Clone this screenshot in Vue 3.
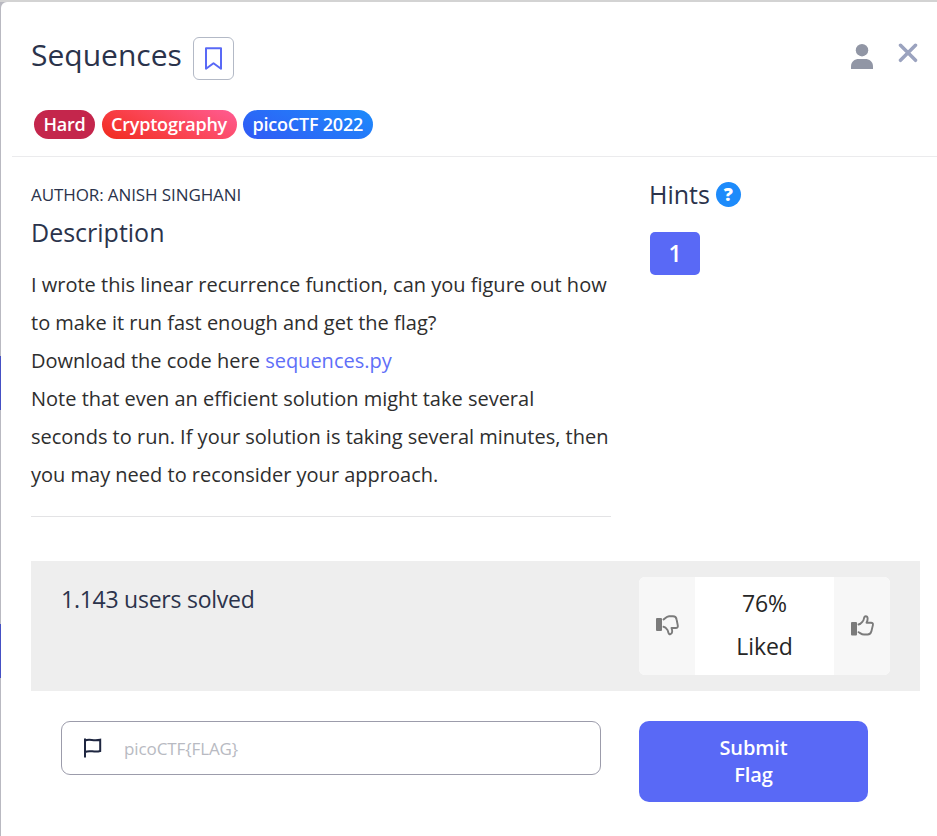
<script setup>
import { ref } from "vue"

const flag = ref("")

const tags = [
    { label: "Hard", type: "hard" },
    { label: "Cryptography", type: "category" },
    { label: "picoCTF 2022", type: "event" },
]
</script>

<template>
    <div class="page">
        <div class="modal">
            <header class="modal-header">
                <div class="title-row">
                    <h1>Sequences</h1>
                    <button class="bookmark" type="button" aria-label="Bookmark">
                        <svg width="18" height="24" viewBox="0 0 18 24">
                            <path d="M1 1.300h15v20.400L8.500 16.200 1 21.700z" fill="none" stroke="#5969f6" stroke-width="2" stroke-linejoin="round" />
                        </svg>
                    </button>
                    <div class="actions">
                        <svg class="user" width="22" height="25" viewBox="0 0 22 25" fill="#9196a5">
                            <circle cx="11" cy="6.200" r="6.200" />
                            <path d="M0 25v-2.500C0 17.500 3.500 15 8 15h6c4.500 0 8 2.500 8 7.500V25z" />
                        </svg>
                        <svg class="close" width="20" height="20" viewBox="0 0 20 20">
                            <path d="M2.500 2.300l15 15M17.500 2.300l-15 15" stroke="#9ba3bf" stroke-width="3.500" stroke-linecap="round" />
                        </svg>
                    </div>
                </div>
                <div class="tags">
                    <span v-for="tag in tags" :key="tag.label" class="tag" :class="tag.type">{{ tag.label }}</span>
                </div>
            </header>

            <main class="content">
                <section class="description">
                    <div class="author">AUTHOR: ANISH SINGHANI</div>
                    <h2>Description</h2>
                    <p>
                        I wrote this linear recurrence function, can you figure out how<br>
                        to make it run fast enough and get the flag?<br>
                        Download the code here <a href="#">sequences.py</a><br>
                        Note that even an efficient solution might take several<br>
                        seconds to run. If your solution is taking several minutes, then<br>
                        you may need to reconsider your approach.
                    </p>
                </section>
                <aside class="hints">
                    <h2>Hints <span class="help">?</span></h2>
                    <button class="hint" type="button">1</button>
                </aside>
            </main>

            <section class="stats">
                <div class="solved">1.143 users solved</div>
                <div class="rating">
                    <button class="vote down" type="button" aria-label="Dislike">
                        <svg width="24" height="21" viewBox="0 0 24 21">
                            <path d="M0 4q0-1 1-1h4q1 0 1 1v11q0 1-1 1H1q-1 0-1-1z" fill="#7b7b7b" />
                            <path d="M7.500 4.500C9 3.500 10.500 1.300 13 1.200h4c2.500 0 3.300 1.300 3.600 3.300l1.200 6c.3 1.500-.5 2.500-2 2.500h-4.300c1 2.500 1.200 6-1.300 6.300-2.200.2-1.700-2.800-2.700-4.300-1-1.500-2-3-4-3.200" fill="none" stroke="#7b7b7b" stroke-width="1.900" stroke-linejoin="round" stroke-linecap="round" />
                        </svg>
                    </button>
                    <div class="score">76%<br>Liked</div>
                    <button class="vote up" type="button" aria-label="Like">
                        <svg width="24" height="21" viewBox="0 0 24 21">
                            <path d="M0 8q0-1 1-1h4q1 0 1 1v11.500q0 1-1 1H1q-1 0-1-1z" fill="#7b7b7b" />
                            <path d="M7.500 9.500C10 9 10.700 7.500 12 6c1.300-1.500.5-4.800 2.700-4.800 2.600 0 2.300 3.800.8 6.500h4.500c1.600 0 2.200 1 1.900 2.400l-1.500 6.200c-.5 2-1.600 3.200-3.800 3.200h-3.600c-2.500 0-3.700-1.500-5.500-2.300" fill="none" stroke="#7b7b7b" stroke-width="1.900" stroke-linejoin="round" stroke-linecap="round" />
                        </svg>
                    </button>
                </div>
            </section>

            <form class="submit" @submit.prevent>
                <label class="flag-field">
                    <svg width="20" height="21" viewBox="0 0 20 21">
                        <path d="M2 .5v19M2 2.700C6 .3 10.500 3.500 17.200 1.700v11.300C11 15 7 11.500 2 14" fill="none" stroke="#1e2640" stroke-width="2" />
                    </svg>
                    <input v-model="flag" type="text" placeholder="picoCTF{FLAG}">
                </label>
                <button class="submit-button" type="submit">Submit<br>Flag</button>
            </form>
        </div>
    </div>
</template>

<style>
body {
    margin: 0;
    overflow: hidden;
}
</style>

<style scoped>
.page {
    box-sizing: border-box;
    width: 937px;
    height: 836px;
    padding: 2px 0 0 1px;
    font-family: "Open Sans", "Noto Sans", sans-serif;
    color: #2b334b;
    /* dimmed page behind the modal */
    background:
        linear-gradient(#4550c4, #4550c4) 0 356px / 1px 54px no-repeat,
        linear-gradient(#4550c4, #4550c4) 0 624px / 1px 54px no-repeat,
        linear-gradient(#d3d3d3, #d3d3d3) 0 0 / 100% 2px no-repeat,
        #b9b9c1;
}

.modal {
    box-sizing: border-box;
    height: 834px;
    background: #fff;
    border-top-left-radius: 6px;
    overflow: hidden;
}

button {
    padding: 0;
    border: none;
    font-family: inherit;
}

h1,
h2,
p {
    margin: 0;
    font-weight: 400;
}

svg {
    display: block;
}

.modal-header {
    box-sizing: border-box;
    height: 155px;
    margin-left: 11px;
    padding: 35px 0 0 19px;
    border-bottom: 1px solid #ebebed;
}

.title-row {
    display: flex;
    align-items: flex-start;

    & h1 {
        width: 162px;
        font-size: 30px;
        line-height: 36px;
    }
}

.bookmark {
    display: flex;
    box-sizing: border-box;
    width: 41px;
    height: 43px;
    padding: 9px 0 0 11px;
    background: #fff;
    border: 1px solid #b3b9c6;
    border-radius: 6px;
}

.actions {
    display: flex;
    gap: 25px;
    margin: 6px 19px 0 auto;

    & .user {
        margin-top: 1px;
    }
}

.tags {
    display: flex;
    gap: 6.500px;
    margin: 30px 0 0 3px;
}

.tag {
    padding: 0 9.500px;
    color: #fff;
    border-radius: 15px;
    font-size: 18px;
    font-weight: 600;
    letter-spacing: -.220px;
    line-height: 29px;

    &.hard {
        background: #c4264c;
    }

    &.category {
        background: linear-gradient(25deg, #f02a1d, #fa4350 45%, #ff5c93);
    }

    &.event {
        background: linear-gradient(25deg, #3159f5, #1d8bfb);
    }
}

.content {
    display: flex;
    height: 403px;
    padding-left: 30px;
}

.description {
    box-sizing: border-box;
    width: 580px;
    height: 360px;
    padding-top: 25px;
    border-bottom: 1px solid #e3e3e5;

    & h2 {
        margin-top: 6px;
        font-size: 25px;
        line-height: 36px;
    }

    & p {
        margin-top: 16px;
        color: #2e2e2e;
        font-size: 20px;
        line-height: 38px;
        white-space: nowrap;
    }

    & a {
        color: #5f6ff8;
        text-decoration: none;
    }
}

.author {
    font-size: 17px;
    letter-spacing: -.1px;
    line-height: 26px;
}

.hints {
    padding: 19px 0 0 38px;

    & h2 {
        display: flex;
        align-items: center;
        gap: 6px;
        height: 36px;
        font-size: 25px;
    }
}

.help {
    width: 25px;
    height: 25px;
    color: #fff;
    background: #1d8bfb;
    border-radius: 50%;
    font-size: 18px;
    font-weight: 800;
    line-height: 25px;
    text-align: center;
}

.hint {
    width: 50px;
    height: 43px;
    margin: 20px 0 0 1px;
    padding-bottom: 2px;
    color: #fff;
    background: #5969f6;
    border-radius: 5px;
    font-size: 23px;
    font-weight: 600;
}

.stats {
    display: flex;
    justify-content: space-between;
    box-sizing: border-box;
    height: 130px;
    margin: 1px 17px 0 30px;
    padding: 16px 30px;
    background: #eee;
}

.solved {
    font-size: 23px;
    letter-spacing: -.250px;
    line-height: 45px;
}

.rating {
    display: flex;
    width: 251px;
    height: 98px;
    background: #fff;
    border-radius: 6px;
    overflow: hidden;
}

.vote {
    width: 56px;
    padding: 0 15px 2px 17px;
    background: #f7f7f7;
}

.score {
    flex: 1;
    padding-top: 5px;
    color: #262626;
    font-size: 23px;
    letter-spacing: -.1px;
    line-height: 43px;
    text-align: center;
}

.submit {
    display: flex;
    align-items: flex-start;
    gap: 38px;
    padding: 30px 0 0 60px;
}

.flag-field {
    display: flex;
    align-items: center;
    box-sizing: border-box;
    width: 540px;
    height: 54px;
    padding-left: 21px;
    border: 1px solid #9c9cab;
    border-radius: 9px;

    & input {
        width: 400px;
        margin-left: 21px;
        padding: 0;
        border: none;
        outline: none;
        font-family: inherit;
        font-size: 17px;
        letter-spacing: -.1px;
    }

    & input::placeholder {
        color: #b8bac2;
    }
}

.submit-button {
    width: 229px;
    height: 81px;
    padding-bottom: 2px;
    color: #fff;
    background: #5969f6;
    border-radius: 10px;
    font-size: 20px;
    font-weight: 600;
    letter-spacing: -.1px;
    line-height: 27px;
}
</style>
